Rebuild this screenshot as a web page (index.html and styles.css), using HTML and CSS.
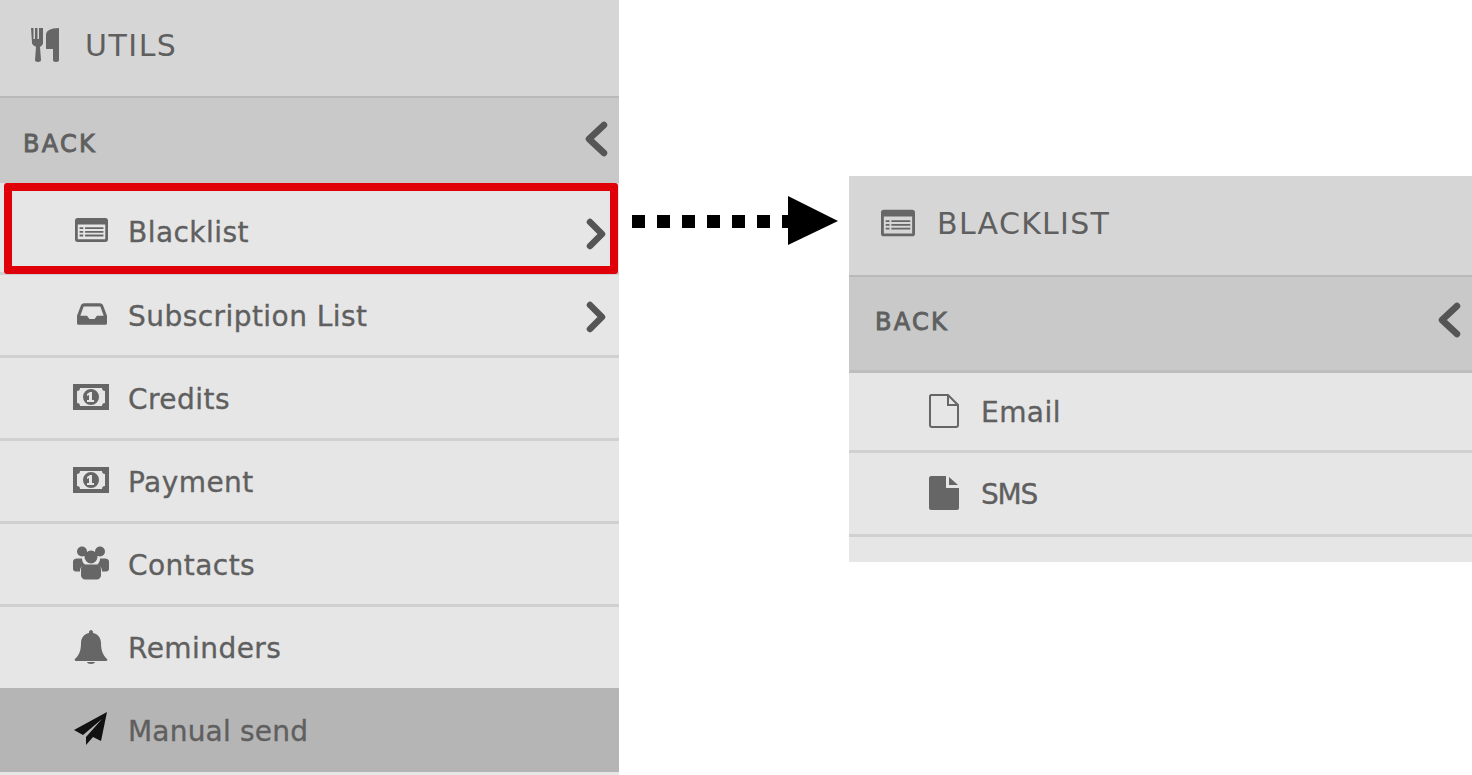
FILE: index.html
```html
<!DOCTYPE html>
<html lang="en">
<head>
    <meta charset="UTF-8">
    <meta name="viewport" content="width=device-width, initial-scale=1.0">
    <title>Utils menu</title>
    <link rel="stylesheet" href="styles.css">
</head>
<body>

    <nav class="menu menu-left">
        <div class="menu-title">
            <svg class="title-icon" viewBox="0 0 28 34"><path d="M0 0h2.500v11h1.500V0h2.500v11H8V0h2.500v0h1.500v15c0 2-2 3-3 4l1 13c0 1-1 2-3 2s-3-1-3-2l1-13c-1-1-4-2-4-4zM15 21V7c0-4 4-7 13-7v32c0 1-1 2-3 2s-3-1-3-2V21z"/></svg>
            <span>UTILS</span>
        </div>
        <div class="menu-back">
            <span>BACK</span>
            <svg class="chevron" viewBox="0 0 24 36"><path d="M20 4 5 18l15 14"/></svg>
        </div>
        <ul class="menu-list">
            <li class="menu-item selected">
                <svg class="item-icon list-icon" viewBox="0 0 36 26"><path fill-rule="evenodd" d="M3 0h30c2 0 3 1 3 3v20c0 2-1 3-3 3H3c-2 0-3-1-3-3V3c0-2 1-3 3-3zm0 7v16h30V7zm2 3h4v2H5zm6 0h20v2H11zm-6 4h4v2H5zm6 0h20v2H11zm-6 4h4v2H5zm6 0h20v2H11z"/></svg>
                <span class="item-label">Blacklist</span>
                <svg class="chevron" viewBox="0 0 24 36"><path d="m6 6 12 12L6 30"/></svg>
            </li>
            <li class="menu-item">
                <svg class="item-icon inbox-icon" viewBox="0 0 36 26"><path fill-rule="evenodd" d="M8 0h20c1 0 2 1 3 2l5 13v9c0 1-1 2-2 2H2c-1 0-2-1-2-2v-9L5 2c1-1 2-2 3-2zm0 4-4 11h8l3 4h6l3-4h8L28 4z"/></svg>
                <span class="item-label">Subscription List</span>
                <svg class="chevron" viewBox="0 0 24 36"><path d="m6 6 12 12L6 30"/></svg>
            </li>
            <li class="menu-item">
                <svg class="item-icon" viewBox="0 0 36 26"><use href="#money"/></svg>
                <span class="item-label">Credits</span>
            </li>
            <li class="menu-item">
                <svg class="item-icon" viewBox="0 0 36 26"><use href="#money"/></svg>
                <span class="item-label">Payment</span>
            </li>
            <li class="menu-item">
                <svg class="item-icon tall-icon" viewBox="0 0 36 33"><path d="M9 0a5 5 0 1 1 0 10A5 5 0 0 1 9 0zm18 0a5 5 0 1 1 0 10 5 5 0 0 1 0-10zM18 4a6.500 6.500 0 1 1 0 13 6.500 6.500 0 0 1 0-13zM0 15c0-2 2-3 4-3h5c0 2 1 5 3 6-3 1-5 3-5 7H3c-2 0-3-1-3-3zm36 0c0-2-2-3-4-3h-5c0 2-1 5-3 6 3 1 5 3 5 7h4c2 0 3-1 3-3zM13 18h10c3 0 5 2 5 5v6c0 2-2 4-4 4H12c-2 0-4-2-4-4v-6c0-3 2-5 5-5z"/></svg>
                <span class="item-label">Contacts</span>
            </li>
            <li class="menu-item reminders">
                <svg class="item-icon tall-icon" viewBox="0 0 36 34"><path d="M18 0c1 0 2 1 2 2v1c5 1 8 5 8 10 0 8 2 12 6 16 1 1 0 2-1 2H3c-1 0-2-1-1-2 4-4 6-8 6-16 0-5 3-9 8-10V2c0-1 1-2 2-2zm-4 32h8c0 1-2 2-4 2s-4-1-4-2z"/></svg>
                <span class="item-label">Reminders</span>
            </li>
            <li class="menu-item active">
                <svg class="item-icon tall-icon send-icon" viewBox="0 0 34 34"><path d="M33 0 0 18l9 5L28 7 12 25v8l7-8 8 4z"/></svg>
                <span class="item-label">Manual send</span>
            </li>
        </ul>
    </nav>

    <div class="arrow">
        <svg viewBox="0 0 206 50" width="206" height="50">
            <path d="M0 20h13v13H0zM25 20h13v13H25zM50 20h13v13H50zM75 20h13v13H75zM100 20h13v13h-13zM125 20h13v13h-13zM150 20h6v13h-6z"/>
            <path d="M156 1l50 25-50 24z"/>
        </svg>
    </div>

    <nav class="menu menu-right">
        <div class="menu-title">
            <svg class="title-icon wide" viewBox="0 0 36 28"><path fill-rule="evenodd" d="M3 0h30c2 0 3 1 3 3v22c0 2-1 3-3 3H3c-2 0-3-1-3-3V3c0-2 1-3 3-3zm0 7v18h30V7zm2 4h4v2H5zm6 0h20v2H11zm-6 4h4v2H5zm6 0h20v2H11zm-6 4h4v2H5zm6 0h20v2H11z"/></svg>
            <span>BLACKLIST</span>
        </div>
        <div class="menu-back">
            <span>BACK</span>
            <svg class="chevron" viewBox="0 0 24 36"><path d="M20 4 5 18l15 14"/></svg>
        </div>
        <ul class="menu-list">
            <li class="menu-item email">
                <svg class="item-icon tall-icon" viewBox="0 0 30 34"><path d="M2 1h17l10 10v20c0 1-1 2-2 2H3c-1 0-2-1-2-2V2zM19 2v9h9" fill="none" stroke="#666" stroke-width="2"/></svg>
                <span class="item-label">Email</span>
            </li>
            <li class="menu-item sms">
                <svg class="item-icon tall-icon" viewBox="0 0 30 34"><path d="M2 0h15v12h13v20c0 1-1 2-2 2H2c-1 0-2-1-2-2V2c0-1 1-2 2-2zM20 1l9 8h-9z"/></svg>
                <span class="item-label">SMS</span>
            </li>
        </ul>
        <div class="menu-foot"></div>
    </nav>

    <svg class="defs" width="0" height="0">
        <defs>
            <path id="money" fill-rule="evenodd" d="M0 0h36v26H0zM7 4c0 2-1 3-3 3v12c2 0 3 1 3 3h22c0-2 1-3 3-3V7c-2 0-3-1-3-3zm11 1a8 8 0 1 1 0 16 8 8 0 0 1 0-16zm-1 3-3 2v2l2-1v5h-2v2h7v-2h-2V8z"/>
        </defs>
    </svg>

</body>
</html>
```

FILE: styles.css
```css
* {
    margin: 0;
    padding: 0;
    box-sizing: border-box;
}

body {
    font-family: "DejaVu Sans", sans-serif;
    background-color: #fff;
    color: #5f5f5f;
    display: flex;
    align-items: flex-start;
    height: 775px;
    overflow: hidden;
}

svg {
    fill: #666;
    flex-shrink: 0;
}

.defs {
    position: absolute;
}

.menu {
    flex-shrink: 0;
    background-color: #e6e6e6;
}

.menu-left {
    width: 619px;
    height: 775px;
}

.menu-right {
    width: 623px;
    margin-top: 176px;
}

/* Title bar */
.menu-title {
    display: flex;
    align-items: center;
    background-color: #d6d6d6;
    border-bottom: 2px solid #b9b9b9;
    height: 98px;
    padding: 0 0 6px 31px;
    font-size: 30px;
    letter-spacing: 1.5px;
}

.menu-right .menu-title {
    height: 101px;
    padding: 0 0 4px 32px;
    letter-spacing: 1.3px;
}

.title-icon {
    width: 28px;
    height: 34px;
    margin-right: 26px;
}

.title-icon.wide {
    width: 34px;
    height: 28px;
    margin: 0 22px 2px 0;
}

/* Back row */
.menu-back {
    display: flex;
    align-items: center;
    justify-content: space-between;
    background-color: #c9c9c9;
    height: 85px;
    padding: 0 10px 0 23px;
    font-size: 24px;
    letter-spacing: 2.3px;
    -webkit-text-stroke: 0.9px #5f5f5f;
}

.menu-back span {
    padding-top: 7px;
}

.menu-back .chevron {
    margin: 0 1px 4px 0;
}

.menu-right .menu-back {
    height: 96px;
    border-bottom: 3px solid #bdbdbd;
    padding: 0 10px 4px 26px;
}

.menu-right .menu-back span {
    padding-top: 0;
}

.chevron {
    width: 24px;
    height: 36px;
    margin-top: 4px;
    fill: none;
    stroke: #555;
    stroke-width: 6.5;
    stroke-linecap: round;
    stroke-linejoin: round;
}

/* Items */
.menu-list {
    list-style: none;
}

.menu-item {
    display: flex;
    align-items: center;
    height: 83px;
    padding: 0 11px 0 73px;
    border-bottom: 3px solid #d0d0d0;
    font-size: 28px;
    letter-spacing: 0.45px;
    -webkit-text-stroke: 0.35px #5f5f5f;
}

.item-icon {
    width: 36px;
    height: 26px;
    margin: 0 19px 2px 0;
}

.list-icon {
    width: 33px;
    height: 24px;
    margin: 0 20px 3px 2px;
}

.inbox-icon {
    width: 30px;
    height: 24px;
    margin: 0 21px 3px 4px;
}

.tall-icon {
    height: 34px;
}

.item-label {
    flex: 1;
    padding-top: 2px;
}

.menu-item.selected {
    position: relative;
    height: 92px;
    padding-top: 8px;
}

.menu-item.selected::after {
    content: "";
    position: absolute;
    top: 0;
    left: 4px;
    right: 1px;
    bottom: -2px;
    border: 8px solid #df0009;
    border-radius: 3px;
}

.menu-item.reminders {
    height: 81px;
    border-bottom: 0;
}

.menu-item.active {
    height: 84px;
    background-color: #b5b5b5;
    border-bottom: 0;
    letter-spacing: 0.2px;
}

.send-icon {
    fill: #111;
}

.menu-item.email {
    height: 80px;
    padding-left: 77px;
}

.menu-item.sms {
    height: 84px;
    padding-left: 77px;
    letter-spacing: -1.2px;
}

.menu-foot {
    height: 25px;
}

/* Dotted arrow between the two panels */
.arrow {
    width: 230px;
    flex-shrink: 0;
    margin-top: 195px;
    padding-left: 13px;
}

.arrow svg {
    display: block;
    fill: #000;
}
```
